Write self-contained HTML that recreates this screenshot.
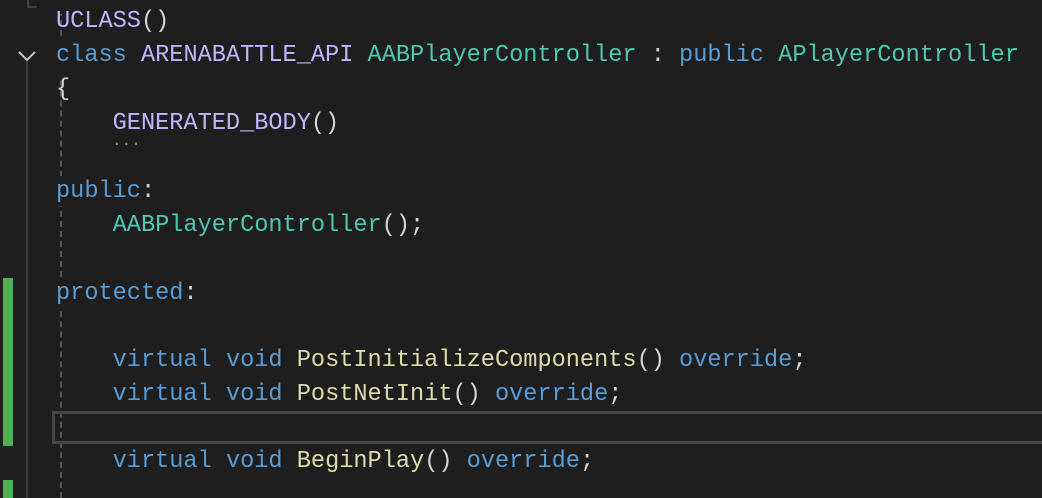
<!DOCTYPE html>
<html><head><style>
body{margin:0;width:1042px;height:498px;background:#1e1e1e;overflow:hidden;position:relative;font-family:"Liberation Mono",monospace;font-size:23.6px;}
.l{position:absolute;left:56px;height:34px;line-height:34px;white-space:pre;color:#d4d4d4}
.m{color:#beb7ff}.k{color:#569cd6}.c{color:#4ec9b0}.f{color:#dcdcaa}.p{color:#d4d4d4}
</style></head><body>
<div style="position:absolute;left:26px;top:62px;width:2px;height:436px;background:#404040"></div>
<div style="position:absolute;left:27px;top:0;width:2px;height:8px;background:#404040"></div>
<div style="position:absolute;left:27px;top:6px;width:10px;height:2px;background:#404040"></div>
<div style="position:absolute;left:60px;top:0;height:498px;border-left:2px dashed #555;"></div>
<div style="position:absolute;left:60px;top:0;width:2px;height:14px;background:#1e1e1e"></div>
<div style="position:absolute;left:60px;top:40px;width:2px;height:40px;background:#1e1e1e"></div>
<div style="position:absolute;left:60px;top:176px;width:2px;height:30px;background:#1e1e1e"></div>
<div style="position:absolute;left:60px;top:278px;width:2px;height:30px;background:#1e1e1e"></div>
<div style="position:absolute;left:3px;top:278px;width:10px;height:168px;background:#4caf50"></div>
<div style="position:absolute;left:3px;top:480px;width:10px;height:18px;background:#4caf50"></div>
<div style="position:absolute;left:52px;top:411px;width:1000px;height:27px;border:3px solid #464646"></div>
<svg style="position:absolute;left:17px;top:48px" width="20" height="16"><path d="M2 4 L10 12 L18 4" stroke="#c5c5c5" stroke-width="2" fill="none"/></svg>
<div class="l" style="top:5px"><span class="m">UCLASS</span>()</div>
<div class="l" style="top:39px"><span class="k">class</span> <span class="m">ARENABATTLE_API</span> <span class="c">AABPlayerController</span> : <span class="k">public</span> <span class="c">APlayerController</span></div>
<div class="l" style="top:73px">{</div>
<div class="l" style="top:107px">    <span class="m">GENERATED_BODY</span>()</div>
<div class="l" style="top:124px;left:112px;color:#888;font-size:16px">...</div>
<div class="l" style="top:175px"><span class="k">public</span>:</div>
<div class="l" style="top:209px">    <span class="c">AABPlayerController</span>();</div>
<div class="l" style="top:277px"><span class="k">protected</span>:</div>
<div class="l" style="top:344px">    <span class="k">virtual</span> <span class="k">void</span> <span class="f">PostInitializeComponents</span>() <span class="k">override</span>;</div>
<div class="l" style="top:378px">    <span class="k">virtual</span> <span class="k">void</span> <span class="f">PostNetInit</span>() <span class="k">override</span>;</div>
<div class="l" style="top:445px">    <span class="k">virtual</span> <span class="k">void</span> <span class="f">BeginPlay</span>() <span class="k">override</span>;</div>
</body></html>
